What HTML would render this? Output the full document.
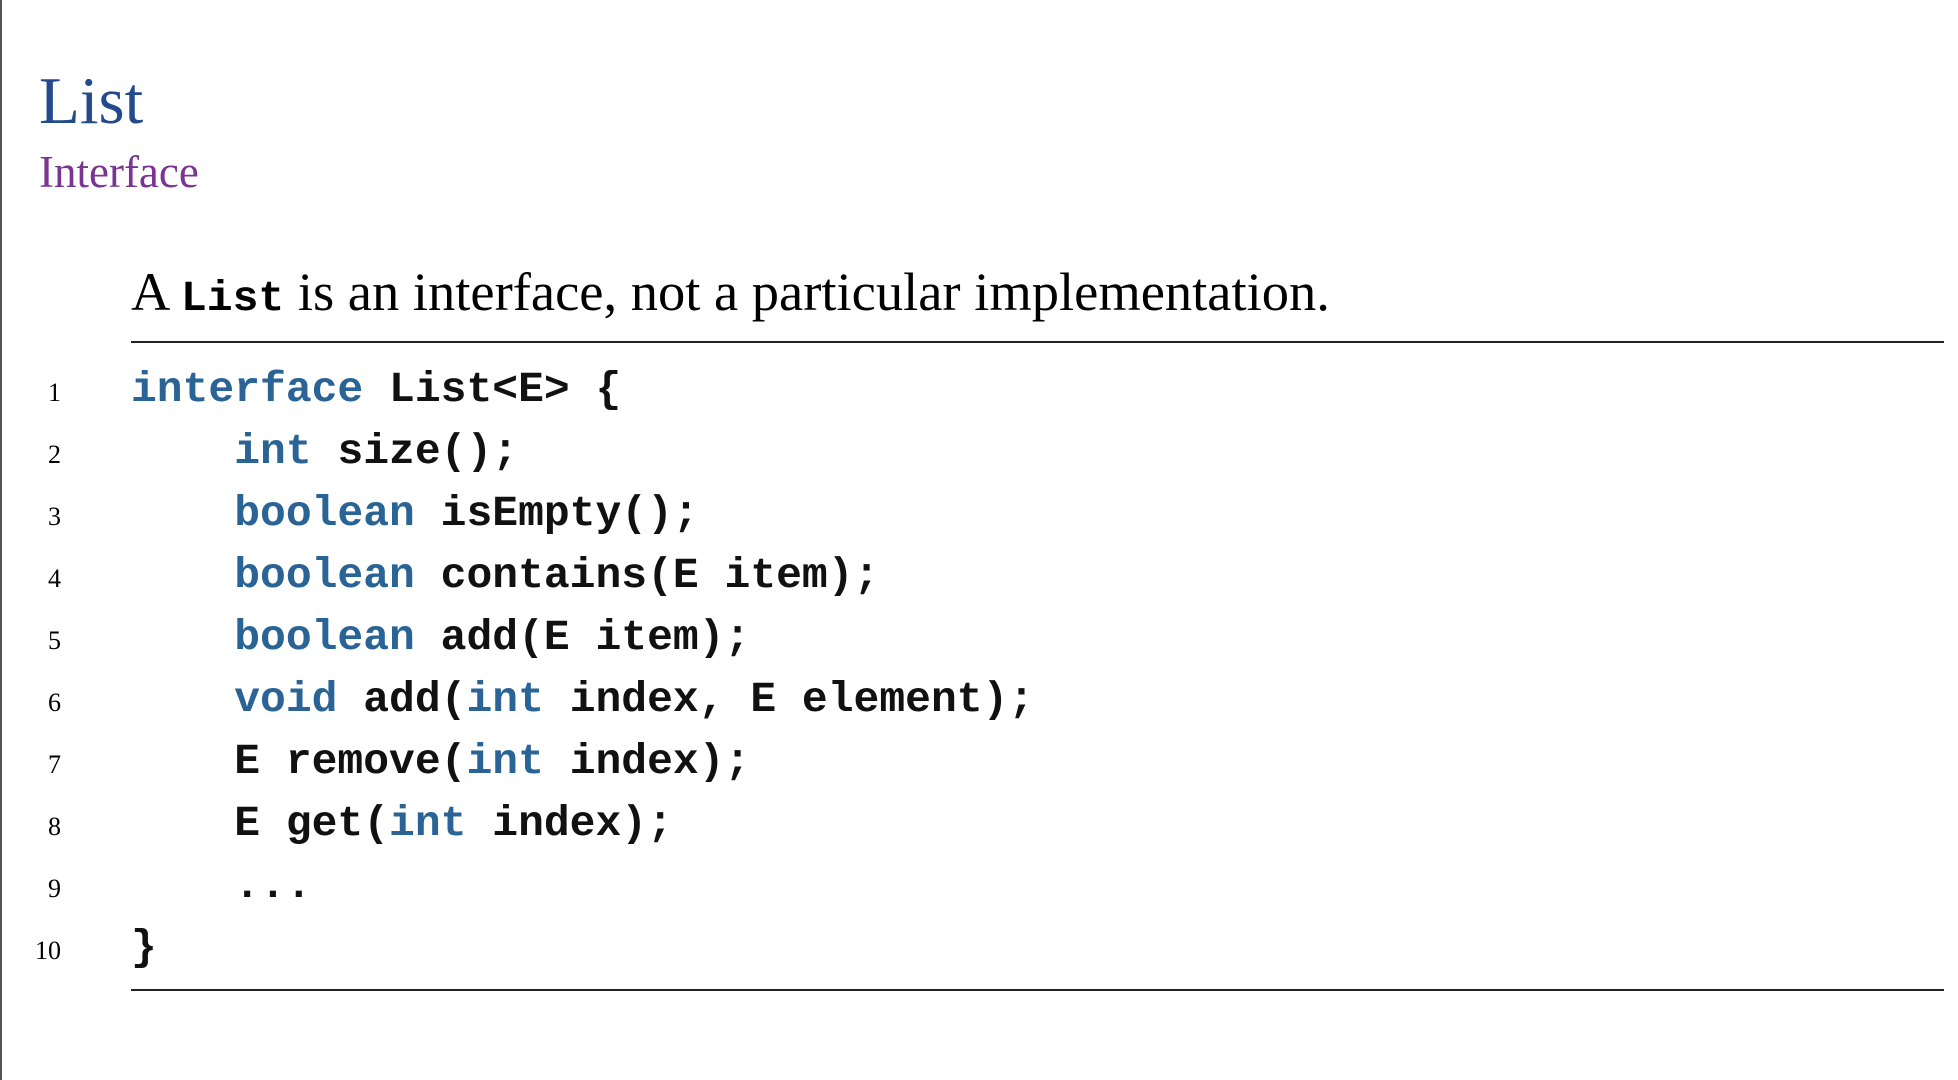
<!DOCTYPE html>
<html><head><meta charset="utf-8"><style>
html,body{margin:0;padding:0;background:#fff;}
body{width:1958px;height:1080px;position:relative;overflow:hidden;border-left:2px solid #555;box-sizing:border-box;}
.t{position:absolute;white-space:pre;line-height:1;}
.title{left:37px;top:68px;font-family:"Liberation Serif",serif;font-size:67px;color:#234a8c;}
.sub{left:37px;top:150px;font-family:"Liberation Serif",serif;font-size:45px;color:#7a3590;}
.sent{left:129px;top:265px;font-family:"Liberation Serif",serif;font-size:54.5px;color:#000;}
.sent b{font-family:"Liberation Mono",monospace;font-weight:bold;font-size:43px;}
.rule{position:absolute;left:129px;width:1813px;height:2px;background:#222;}
.code{position:absolute;left:129px;font-family:"Liberation Mono",monospace;font-weight:bold;font-size:43px;color:#111;white-space:pre;line-height:62px;top:359px;}
.k{color:#2a6496;}
.ln{position:absolute;left:0;font-family:"Liberation Serif",serif;font-size:26px;color:#000;text-align:right;line-height:62px;top:362px;width:59px;}
</style></head><body>
<div class="t title">List</div>
<div class="t sub">Interface</div>
<div class="t sent">A <b>List</b> is an interface, not a particular implementation.</div>
<div class="rule" style="top:341px"></div>
<div class="ln">1<br>2<br>3<br>4<br>5<br>6<br>7<br>8<br>9<br>10</div>
<div class="code"><span class="k">interface</span> List&lt;E&gt; {
    <span class="k">int</span> size();
    <span class="k">boolean</span> isEmpty();
    <span class="k">boolean</span> contains(E item);
    <span class="k">boolean</span> add(E item);
    <span class="k">void</span> add(<span class="k">int</span> index, E element);
    E remove(<span class="k">int</span> index);
    E get(<span class="k">int</span> index);
    ...
}</div>
<div class="rule" style="top:989px"></div>
</body></html>
